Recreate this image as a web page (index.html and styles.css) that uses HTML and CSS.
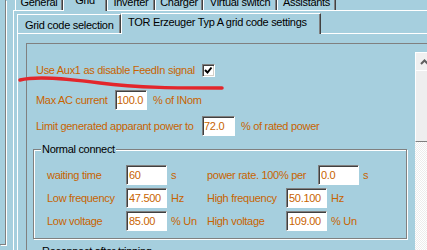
FILE: index.html
```html
<!DOCTYPE html>
<html lang="en">

<head>
    <meta charset="UTF-8">
    <title>Grid code settings</title>
    <link rel="stylesheet" href="styles.css">
</head>

<body>
    <div class="side"></div>
    <div class="main">
        <!-- top tabs -->
        <div class="toptabs">
            <div class="tab t-general">General</div>
            <div class="tab t-grid on">Grid</div>
            <div class="tab t-inverter">Inverter</div>
            <div class="tab t-charger">Charger</div>
            <div class="tab t-virtual">Virtual switch</div>
            <div class="tab t-assist">Assistants</div>
        </div>
        <div class="page">
            <div class="subtabs">
                <div class="subtab">Grid code selection</div>
                <div class="subtab on">TOR Erzeuger Typ A grid code settings</div>
            </div>
            <div class="subpage">
                <div class="panel">
                    <div class="form">
                        <div class="row r-aux">
                            <span class="lab w-aux">Use Aux1 as disable FeedIn signal</span>
                            <span class="check">
                                <svg width="9" height="9" viewBox="0 0 9 9">
                                    <polyline points="1,4 3.5,6.5 7.5,1.5" fill="none" stroke="#000" stroke-width="2"/>
                                </svg>
                            </span>
                        </div>
                        <div class="row r-max">
                            <span class="lab w-max">Max AC current</span>
                            <input class="fld tight f-max" type="text" value="100.0">
                            <span class="after">% of INom</span>
                        </div>
                        <div class="row r-lim">
                            <span class="lab w-lim">Limit generated apparant power to</span>
                            <input class="fld tight f-lim" type="text" value="72.0">
                            <span class="after">% of rated power</span>
                        </div>

                        <!-- Normal connect -->
                        <div class="group">
                            <div class="legend">Normal connect</div>
                            <div class="grow first">
                                <span class="c1">waiting time</span>
                                <input class="fld" type="text" value="60">
                                <span class="unit">s</span>
                                <span class="c3 wide">power rate. 100% per</span>
                                <input class="fld" type="text" value="0.0">
                                <span class="unit">s</span>
                            </div>
                            <div class="grow">
                                <span class="c1">Low frequency</span>
                                <input class="fld" type="text" value="47.500">
                                <span class="unit">Hz</span>
                                <span class="c3">High frequency</span>
                                <input class="fld" type="text" value="50.100">
                                <span class="unit">Hz</span>
                            </div>
                            <div class="grow">
                                <span class="c1">Low voltage</span>
                                <input class="fld" type="text" value="85.00">
                                <span class="unit">% Un</span>
                                <span class="c3">High voltage</span>
                                <input class="fld" type="text" value="109.00">
                                <span class="unit">% Un</span>
                            </div>
                        </div>

                        <div class="group next">
                            <div class="legend">Reconnect after tripping</div>
                        </div>
                    </div>
                    <div class="scrollbar">
                        <div class="sb-up">
                            <svg width="9" height="6" viewBox="0 0 9 6">
                                <polyline points="1,5 4.5,1.5 8,5" fill="none" stroke="#606060" stroke-width="2"/>
                            </svg>
                        </div>
                        <div class="sb-thumb"></div>
                        <div class="sb-track"></div>
                    </div>
                </div>
            </div>
        </div>
    </div>

    <!-- red marker stroke drawn over the form -->
    <svg class="mark" width="427" height="250" viewBox="0 0 427 250">
        <path d="M20,80 C36,76 62,78 100,83 S180,88 222,88" fill="none" stroke="#e3262b" stroke-width="3.5" stroke-linecap="round"/>
    </svg>
</body>

</html>
```

FILE: styles.css
```css
* {
    box-sizing: border-box;
}

body {
    margin: 0;
    width: 427px;
    height: 250px;
    overflow: hidden;
    display: flex;
    background-color: #a6cfde;
    font-family: "Liberation Sans", Arial, sans-serif;
    font-size: 11px;
    letter-spacing: -0.3px;
    color: #c86400;
}

.side {
    flex: 0 0 6px;
    height: 245px;
    border-right: 1px solid #808080;
    border-bottom: 1px solid #808080;
    box-shadow: 1px 1px 0 #fff;
}

.main {
    flex: 1;
    margin-left: 7px;
    height: 250px;
    display: flex;
    flex-direction: column;
    min-width: 0;
}

/* top tabs */

.toptabs {
    height: 10px;
    display: flex;
    align-items: flex-end;
    padding-left: 2px;
}

.tab {
    flex: none;
    height: 14px;
    line-height: 12px;
    text-align: center;
    color: #000;
    border-left: 1px solid #fff;
    border-right: 1px solid #404040;
    box-shadow: inset -1px 0 #808080;
}

.tab.on {
    height: 16px;
    line-height: 10px;
    margin-bottom: -1px;
    position: relative;
    background-color: #a6cfde;
}

.t-general { width: 48px; }
.t-grid { width: 44px; }
.t-inverter { width: 48px; }
.t-charger { width: 48px; }
.t-virtual { width: 74px; }
.t-assist { width: 59px; }

.page {
    flex: 1;
    border-left: 1px solid #fff;
    border-top: 1px solid #fff;
    padding-left: 3px;
    display: flex;
    flex-direction: column;
    min-height: 0;
}

/* second tab row */

.subtabs {
    height: 20px;
    margin-top: 2px;
    display: flex;
    align-items: flex-end;
}

.subtab {
    flex: none;
    width: 104px;
    height: 19px;
    padding: 2px 0 0 7px;
    line-height: 16px;
    color: #000;
    border-top: 1px solid #fff;
    border-left: 1px solid #fff;
    border-right: 1px solid #404040;
    box-shadow: inset -1px 0 #808080;
}

.subtab.on {
    width: 200px;
    height: 21px;
    padding: 0 0 0 6px;
    line-height: 17px;
    margin-bottom: -1px;
    position: relative;
    background-color: #a6cfde;
}

.subpage {
    flex: 1;
    border-top: 1px solid #fff;
    border-left: 1px solid #fff;
    padding: 9px 0 0 8px;
    display: flex;
    min-height: 0;
}

.panel {
    flex: 1;
    border-top: 1px solid #808080;
    border-left: 1px solid #808080;
    display: flex;
    min-width: 0;
}

.form {
    flex: 0 0 388px;
    padding: 19px 0 0 6px;
}

/* form rows */

.row {
    display: flex;
    align-items: center;
    margin-left: 3px;
}

.r-aux {
    height: 14px;
}

.r-max {
    height: 20px;
    margin-top: 13px;
}

.r-lim {
    height: 20px;
    margin-top: 6px;
}

.lab {
    flex: none;
    white-space: nowrap;
}

.w-aux { width: 166px; }
.w-max { width: 79px; }
.w-lim { width: 166px; }

.after {
    margin-left: 6px;
    white-space: nowrap;
}

.check {
    flex: none;
    width: 13px;
    height: 13px;
    background-color: #fff;
    border: 1px solid;
    border-color: #808080 #fff #fff #808080;
    box-shadow: inset 1px 1px 0 #404040, inset -1px -1px 0 #d4d0c8;
    display: flex;
    align-items: center;
    justify-content: center;
}

.fld {
    flex: none;
    width: 41px;
    height: 20px;
    margin: 0;
    padding: 0 0 0 2px;
    border: 1px solid;
    border-color: #808080 #fff #fff #808080;
    box-shadow: inset 1px 1px 0 #404040;
    background-color: #fff;
    color: #c86400;
    font: inherit;
    letter-spacing: inherit;
    outline: none;
}

.fld.tight {
    padding-left: 1px;
}

.f-max { width: 32px; }
.f-lim { width: 33px; }

/* group boxes */

.group {
    width: 374px;
    margin-top: 13px;
    padding: 0 0 7px 13px;
    border: 1px solid #808080;
    box-shadow: 1px 1px 0 #fff, inset 1px 1px 0 #fff;
}

.group.next {
    margin-top: 12px;
    height: 40px;
}

.legend {
    display: table;
    margin: -8px 0 0 -6px;
    padding: 0 1px;
    line-height: 14px;
    color: #000;
    background-color: #a6cfde;
}

.grow {
    display: flex;
    align-items: center;
    height: 20px;
    margin-top: 3px;
    white-space: nowrap;
}

.grow.first {
    margin-top: 9px;
}

.c1 {
    flex: none;
    width: 79px;
}

.unit {
    flex: none;
    width: 40px;
    padding-left: 4px;
}

.c3 {
    flex: none;
    width: 79px;
}

.c3.wide {
    width: 111px;
}

/* scrollbar */

.scrollbar {
    flex: 0 0 17px;
    margin-top: 8px;
    display: flex;
    flex-direction: column;
}

.sb-up {
    height: 18px;
    background-color: #f0f0f0;
    border-left: 1px solid #fff;
    border-top: 1px solid #fff;
    display: flex;
    align-items: center;
    justify-content: center;
}

.sb-thumb {
    height: 72px;
    background-color: #eeeeee;
    border-left: 1px solid #fff;
    border-top: 1px solid #fff;
    border-bottom: 1px solid #808080;
}

.sb-track {
    flex: 1;
    background: repeating-conic-gradient(#ececec 0 25%, #fff 0 50%) 0 0 / 2px 2px;
}

.mark {
    position: absolute;
    left: 0;
    top: 0;
    pointer-events: none;
}
```
